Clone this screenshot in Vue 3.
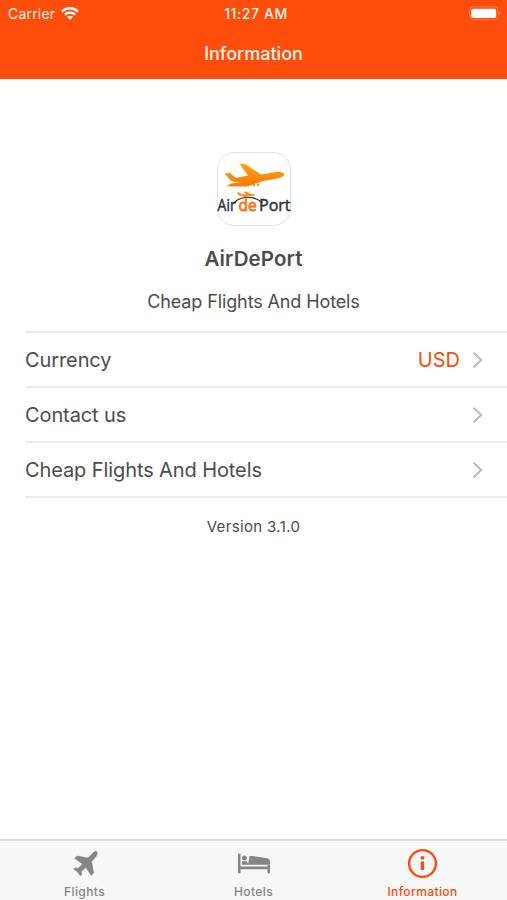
<script setup>
const rows = [
  { label: 'Currency', value: 'USD' },
  { label: 'Contact us' },
  { label: 'Cheap Flights And Hotels' },
]
</script>

<template>
  <div class="screen">
    <header class="header">
      <div class="status">
        <div class="carrier">
          <span class="carrier-name">Carrier</span>
          <svg class="wifi" width="18" height="13" viewBox="0 0 18 13">
            <g fill="none" stroke="#fff" stroke-width="2.4">
              <path d="M1 4.6C5.5.2 12.5.2 17 4.6" />
              <path d="M3.9 7.7c2.9-2.8 7.3-2.8 10.2 0" />
            </g>
            <path d="M6 9.8c1.7-1.5 4.3-1.5 6 0l-3 3z" fill="#fff" />
          </svg>
        </div>
        <span class="time">11:27 AM</span>
        <div class="power">
          <svg width="33" height="15" viewBox="0 0 33 15">
            <rect x=".7" y=".9" width="28.6" height="12.8" rx="4" fill="none" stroke="#ff7a48" />
            <rect x="2.2" y="2.8" width="25" height="9.2" rx="2" fill="#fff" />
            <path d="M30.6 5.2q2 2.2 0 4.4z" fill="#ff7a48" />
          </svg>
        </div>
      </div>
      <h1 class="title"><span>Information</span></h1>
    </header>

    <main class="content">
      <svg class="logo" width="76" height="76" viewBox="0 0 76 76">
        <defs>
          <linearGradient id="plane" x1="0" y1="0" x2="0" y2="1">
            <stop offset="0" stop-color="#ffa51c" />
            <stop offset="1" stop-color="#f77900" />
          </linearGradient>
        </defs>
        <rect x="1.5" y="1.5" width="73" height="73" rx="17" fill="#fff" stroke="#e1e1e1" />
        <g fill="url(#plane)">
          <path d="M8.5 22.5 14 22l6 5 12-2.6-8.3-11.2 5-.5L45 23.5l15-2.6c4-.6 8 .4 8.3 2.3.2 2-3.2 3.600-7 4.300l-14 2.400L31 35.500l-20.500-.2 4.500-2.700 12-1.600c-7 .4-11.500-.1-12.600-1.900z" />
          <rect x="37" y="32.8" width="2" height="2.400" />
          <rect x="41" y="32.300" width="2" height="2.400" />
        </g>
        <path d="M18 52C24.500 44.500 39 44.500 46.500 52" fill="none" stroke="#333" stroke-width="1.400" />
        <g class="wordmark" fill="#323236" stroke="#323236" stroke-width=".5">
          <text x="1.600" y="59.500" textLength="18" lengthAdjust="spacingAndGlyphs">Air</text>
          <text x="22.600" y="59.500" textLength="18.200" lengthAdjust="spacingAndGlyphs" fill="#fb7624" stroke="#fb7624" stroke-width=".9">de</text>
          <text x="43" y="59.500" textLength="31.500" lengthAdjust="spacingAndGlyphs">Port</text>
        </g>
        <path d="M21 41.500h2.800l1.800 1.800 4.600-.1-2.700-2.500 2-.1 5.500 2.500 3.200.1 1 .9-1.800.8-5.400.2-6 2.500h-2.500l3.700-2.600-4.700-.8z" fill="#f98a13" />
      </svg>
      <h2 class="name"><span>AirDePort</span></h2>
      <p class="tagline"><span>Cheap Flights And Hotels</span></p>

      <ul class="list">
        <li v-for="row in rows" :key="row.label" class="row">
          <span class="label">{{ row.label }}</span>
          <span v-if="row.value" class="value">{{ row.value }}</span>
          <svg class="chevron" width="12" height="18" viewBox="0 0 12 18">
            <path d="M1.6 1.7 9.3 9l-7.7 7.3" fill="none" stroke="#b9b9b9" stroke-width="2" />
          </svg>
        </li>
      </ul>
      <p class="version"><span>Version 3.1.0</span></p>
    </main>

    <nav class="tabs">
      <div class="tab">
        <svg width="34" height="32" viewBox="0 0 34 32">
          <path d="M28.500 3.500c1.300 1.300.6 3.600-.8 5.200L23.500 13.500l2 11.500-2.200 2.200-5.600-8-4.500 4.300.6 3-1.500 1.300-2.600-4-4-2.500 1.400-1.400 3.100.5 4.300-4.500-7.800-5.600 2.200-2.200 11.200 2 4.300-4.400c1.400-1.400 3.200-3.100 4.100-2.200z" fill="#858585" stroke="#858585" stroke-width=".7" stroke-linejoin="round" />
        </svg>
        <span class="flights">Flights</span>
      </div>
      <div class="tab">
        <svg width="34" height="32" viewBox="0 0 34 32">
          <g fill="#858585">
            <path d="M1 5.700h2.500v12.800h27v-1.700H33v8.400h-2.500v-4h-27v4H1z" />
            <circle cx="7.400" cy="10" r="2.500" />
            <path d="M12.500 8h3l14.500 2.200q3 .5 3 3v3.600H11z" />
            <path d="M5 13.300h4.800l1.500 3.500H5z" />
          </g>
        </svg>
        <span class="hotels">Hotels</span>
      </div>
      <div class="tab active">
        <svg width="34" height="32" viewBox="0 0 34 32">
          <circle cx="16.500" cy="15.500" r="13.400" fill="none" stroke="#fb4b0d" stroke-width="2.400" />
          <circle cx="16.500" cy="9.800" r="1.900" fill="#fb4b0d" />
          <rect x="14.900" y="13.300" width="3.200" height="9" rx="1.200" fill="#fb4b0d" />
        </svg>
        <span class="info">Information</span>
      </div>
    </nav>
  </div>
</template>

<style>
body {
  margin: 0;
}
</style>

<style scoped>
.screen {
  display: flex;
  flex-direction: column;
  height: 900px;
  background: #fff;
  color: #4c4c4c;
  font-family: Inter, "Liberation Sans", sans-serif;
}
.header {
  height: 79px;
  background: #ff4d0b;
  color: #fff3ea;
}
.status {
  display: grid;
  grid-template-columns: 1fr auto 1fr;
  align-items: center;
  height: 27px;
  padding: 0 5px 0 8px;
}
.carrier {
  display: flex;
  align-items: center;
  gap: 6px;
}
.carrier-name {
  font-size: 14px;
  letter-spacing: 0.2px;
}
.wifi {
  display: block;
}
.time {
  font-size: 14px;
  font-weight: 500;
  letter-spacing: 0.6px;
  padding-left: 2px;
}
.power {
  display: flex;
  justify-content: flex-end;
}
.title {
  margin: 0;
  text-align: center;
  font-size: 18px;
  line-height: 53px;
  font-weight: 500;
}
.content {
  flex: 1;
  display: flex;
  flex-direction: column;
  align-items: center;
  padding-top: 72px;
}
.logo {
  display: block;
}
.wordmark {
  font-family: "Open Sans", sans-serif;
  font-size: 16.5px;
}
.name {
  margin: 17px 0 0;
  font-size: 20.5px;
  line-height: 30px;
  font-weight: 600;
  letter-spacing: 0.1px;
}
.tagline {
  margin: 14px 0 0;
  font-size: 18px;
  line-height: 28px;
  letter-spacing: -0.12px;
}
.list {
  align-self: stretch;
  margin: 15px 0 0 25px;
  padding: 0;
  list-style: none;
  border-top: 2px solid #ececec;
}
.row {
  box-sizing: border-box;
  display: flex;
  align-items: center;
  height: 55px;
  padding-right: 23px;
  border-bottom: 2px solid #ececec;
}
.label {
  flex: 1;
  padding-top: 1px;
  font-size: 20px;
  letter-spacing: -0.1px;
}
.value {
  padding-top: 1px;
  color: #fb4b0d;
  font-size: 20px;
  margin-right: 12px;
}
.version {
  margin: 16px 0 0;
  font-size: 15px;
  line-height: 26px;
  letter-spacing: 0.35px;
}
.tabs {
  box-sizing: border-box;
  display: grid;
  grid-template-columns: repeat(3, 1fr);
  height: 61px;
  border-top: 2px solid #dcdcdc;
  background: #f7f7f7;
  color: #858585;
}
.tab {
  display: flex;
  flex-direction: column;
  align-items: center;
  gap: 2px;
  padding-top: 7px;
  font-size: 12px;
  line-height: 20px;
  font-weight: 500;
  letter-spacing: 0.4px;
}
.tab svg {
  display: block;
}
.active {
  color: #fb4b0d;
}
</style>
